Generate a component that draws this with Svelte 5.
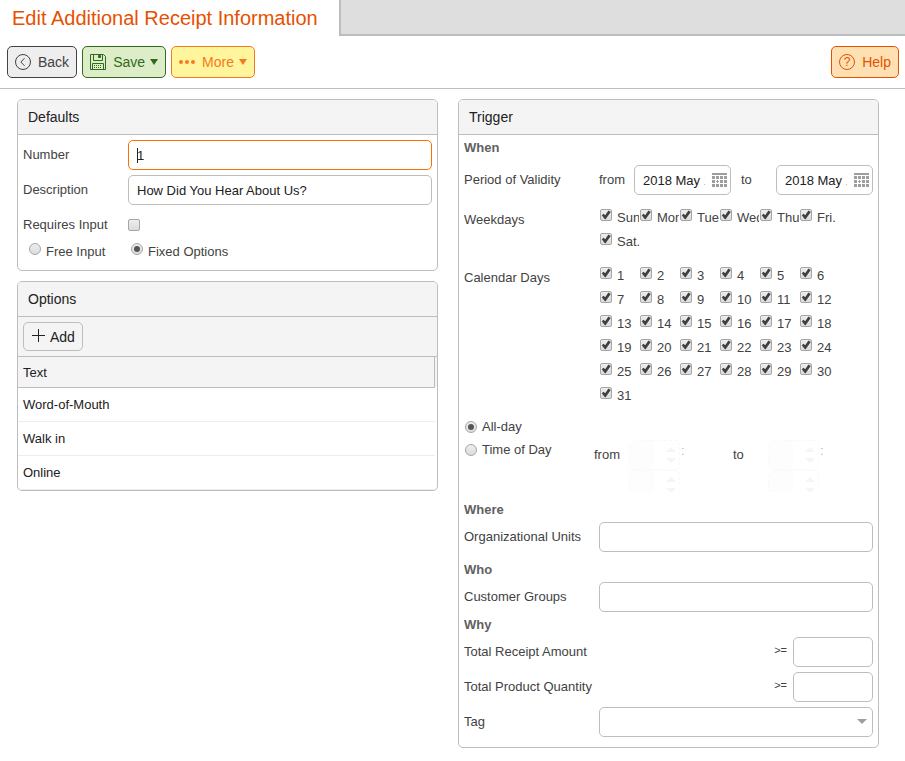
<script lang="ts">
	type Option = { id: number; text: string };

	let number = $state('1');
	let description = $state('How Did You Hear About Us?');
	let requiresInput = $state(false);
	let inputKind = $state('fixed');
	let timeKind = $state('all-day');
	let validFrom = $state('2018 May 1');
	let validTo = $state('2018 May 1');

	let options = $state<Option[]>([
		{ id: 1, text: 'Word-of-Mouth' },
		{ id: 2, text: 'Walk in' },
		{ id: 3, text: 'Online' }
	]);

	let weekdays = $state(
		['Sun.', 'Mon.', 'Tue.', 'Wed.', 'Thu.', 'Fri.', 'Sat.'].map((name) => ({ name, on: true }))
	);
	let days = $state(Array.from({ length: 31 }, (_, i) => ({ name: String(i + 1), on: true })));

	function addOption() {
		options.push({ id: options.length + 1, text: '' });
	}
</script>

{#snippet calendarIcon()}
	<svg width="15" height="14" viewBox="0 0 15 14" aria-hidden="true">
		<path d="M0 0h15v2H0z" />
		{#each [3, 7, 11] as y}
			{#each [0, 4, 8, 12] as x}
				{#if x === 4 && y === 7}
					<path d="M5 7h1v1h1v1H6v1H5V9H4V8h1z" />
				{:else}
					<rect {x} {y} width="3" height="3" />
				{/if}
			{/each}
		{/each}
	</svg>
{/snippet}

{#snippet dateField(id: string, value: string, label: string)}
	<div class="field date">
		<input {id} type="text" {value} aria-label={label} />
		<button type="button" aria-label="Open calendar">{@render calendarIcon()}</button>
	</div>
{/snippet}

{#snippet timeField(name: string)}
	<div class="time">
		<div class="spin">
			<input type="text" aria-label="{name} hour" disabled />
			<span class="arrows"></span>
		</div>
		<span class="colon">:</span>
		<div class="spin">
			<input type="text" aria-label="{name} minute" disabled />
			<span class="arrows"></span>
		</div>
	</div>
{/snippet}

<header class="tabs">
	<h1>Edit Additional Receipt Information</h1>
	<div class="rest"></div>
</header>

<nav class="toolbar">
	<button type="button" class="btn back">
		<svg width="16" height="16" viewBox="0 0 16 16" aria-hidden="true">
			<circle cx="8" cy="8" r="7.5" />
			<path d="M9.5 4.2 5.8 8l3.7 3.8" />
		</svg>
		<span>Back</span>
	</button>
	<button type="button" class="btn save">
		<svg width="16" height="16" viewBox="0 0 16 16" aria-hidden="true">
			<path d="M.5.5h13l2 2v13H.5zM3.5.5v6h9v-6M2.5 15.5v-6h11v6" />
			<path d="M4 11.5h8M4 13.5h8" stroke-dasharray="1 1" />
			<path class="solid" d="M8.5 1.5h2v2h-2z" />
		</svg>
		<span>Save</span>
		<i class="caret"></i>
	</button>
	<button type="button" class="btn more">
		<svg width="16" height="16" viewBox="0 0 16 16" aria-hidden="true">
			<circle class="dot" cx="2" cy="8" r="2" />
			<circle class="dot" cx="8" cy="8" r="2" />
			<circle class="dot" cx="14" cy="8" r="2" />
		</svg>
		<span>More</span>
		<i class="caret"></i>
	</button>
	<button type="button" class="btn help">
		<svg width="16" height="16" viewBox="0 0 16 16" aria-hidden="true">
			<circle cx="8" cy="8" r="7.5" />
			<text x="8" y="12" text-anchor="middle">?</text>
		</svg>
		<span>Help</span>
	</button>
</nav>

<main>
	<div class="column">
		<section class="panel">
			<h2>Defaults</h2>
			<div class="body">
				<div class="row">
					<label for="number">Number</label>
					<input id="number" class="field current" type="text" bind:value={number} />
				</div>
				<div class="row">
					<label for="description">Description</label>
					<input id="description" class="field" type="text" bind:value={description} />
				</div>
				<div class="row">
					<label for="requires">Requires Input</label>
					<input id="requires" type="checkbox" bind:checked={requiresInput} />
				</div>
				<div class="kinds">
					<label><input type="radio" name="kind" value="free" bind:group={inputKind} />Free Input</label>
					<label><input type="radio" name="kind" value="fixed" bind:group={inputKind} />Fixed Options</label>
				</div>
			</div>
		</section>

		<section class="panel">
			<h2>Options</h2>
			<div class="actions">
				<button type="button" class="add" onclick={addOption}>
					<svg width="14" height="14" viewBox="0 0 14 14" aria-hidden="true">
						<path d="M6.5 0v13M0 6.5h13" />
					</svg>
					<span>Add</span>
				</button>
			</div>
			<div class="table-wrap">
				<table>
					<thead>
						<tr><th>Text</th></tr>
					</thead>
					<tbody>
						{#each options as option (option.id)}
							<tr><td>{option.text}</td></tr>
						{/each}
					</tbody>
				</table>
			</div>
		</section>
	</div>

	<section class="panel">
		<h2>Trigger</h2>
		<div class="body trigger">
			<h3>When</h3>
			<div class="row spaced">
				<span class="name">Period of Validity</span>
				<div class="period">
					<label for="valid-from">from</label>
					{@render dateField('valid-from', validFrom, 'Valid from')}
					<label for="valid-to">to</label>
					{@render dateField('valid-to', validTo, 'Valid to')}
				</div>
			</div>
			<div class="row top spaced">
				<span>Weekdays</span>
				<div class="checks">
					{#each weekdays as day}
						<label><input type="checkbox" bind:checked={day.on} />{day.name}</label>
					{/each}
				</div>
			</div>
			<div class="row top spaced">
				<span>Calendar Days</span>
				<div class="checks">
					{#each days as day}
						<label><input type="checkbox" bind:checked={day.on} />{day.name}</label>
					{/each}
				</div>
			</div>
			<div class="hours">
				<label class="choice"><input type="radio" name="time" value="all-day" bind:group={timeKind} />All-day</label>
				<div class="range">
					<label class="choice"><input type="radio" name="time" value="range" bind:group={timeKind} />Time of Day</label>
					<span class="word">from</span>
					{@render timeField('From')}
					<span class="word">to</span>
					{@render timeField('To')}
				</div>
			</div>

			<h3 class="spaced">Where</h3>
			<div class="row">
				<label for="units">Organizational Units</label>
				<input id="units" class="field" type="text" />
			</div>

			<h3 class="spaced">Who</h3>
			<div class="row">
				<label for="groups">Customer Groups</label>
				<input id="groups" class="field" type="text" />
			</div>

			<h3>Why</h3>
			<div class="row">
				<label for="amount">Total Receipt Amount</label>
				<div class="limit">
					<span>&gt;=</span>
					<input id="amount" class="field" type="text" />
				</div>
			</div>
			<div class="row">
				<label for="quantity">Total Product Quantity</label>
				<div class="limit">
					<span>&gt;=</span>
					<input id="quantity" class="field" type="text" />
				</div>
			</div>
			<div class="row">
				<label for="tag">Tag</label>
				<div class="select">
					<select id="tag" class="field"><option value=""></option></select>
				</div>
			</div>
		</div>
	</section>
</main>

<style>
	:global(body) {
		background: #fff;
		color: #424242;
		font: 13px/15px 'Liberation Sans', Arial, sans-serif;
	}

	:global(#app) *,
	:global(#app) *::before {
		box-sizing: border-box;
	}

	h1,
	h2,
	h3 {
		margin: 0;
	}

	button,
	input,
	select {
		margin: 0;
		font: inherit;
	}

	svg {
		flex: none;
		fill: none;
		stroke: currentColor;
	}

	.solid {
		fill: currentColor;
	}

	.dot {
		fill: currentColor;
		stroke: none;
	}

	.tabs {
		display: flex;
		height: 36px;
	}

	h1 {
		padding: 0 21px 0 12px;
		color: #e65100;
		font-size: 20px;
		font-weight: 400;
		line-height: 36px;
		white-space: nowrap;
	}

	.rest {
		flex: 1;
		border: solid #bdbdbd;
		border-width: 0 0 2px 2px;
		background: #dedede;
	}

	.toolbar {
		display: flex;
		gap: 5px;
		padding: 10px 6px 10px 7px;
		border-bottom: 1px solid #bdbdbd;
	}

	.btn {
		display: flex;
		align-items: center;
		height: 32px;
		padding: 0 7px;
		border: 1px solid;
		border-radius: 5px;
		font-size: 14px;
		cursor: pointer;
	}

	.btn span {
		margin-left: 7px;
	}

	.back {
		background: #eee;
		color: #424242;
	}

	.save {
		background: #dcedc8;
		color: #33691e;
	}

	.more {
		background: #fff59d;
		color: #f57920;
	}

	.help {
		margin-left: auto;
		background: #ffe0b2;
		color: #e65100;
	}

	.help text {
		fill: currentColor;
		stroke: none;
		font-size: 12px;
	}

	.caret {
		width: 8px;
		height: 6px;
		margin-left: 5px;
		background: currentColor;
		clip-path: polygon(0 0, 100% 0, 50% 100%);
	}

	main {
		display: grid;
		grid-template-columns: 1fr 1fr;
		align-items: start;
		gap: 20px;
		padding: 10px 26px 13px 17px;
	}

	.column {
		display: grid;
		gap: 10px;
	}

	.panel {
		min-width: 0;
		border: 1px solid #bdbdbd;
		border-radius: 5px;
		overflow: hidden;
	}

	h2 {
		padding: 0 10px;
		border-bottom: 1px solid #bdbdbd;
		background: #f4f4f4;
		color: #212121;
		font-size: 14px;
		font-weight: 400;
		line-height: 34px;
	}

	h3 {
		color: #616161;
		font-size: 13px;
		line-height: 15px;
	}

	.body {
		display: flex;
		flex-direction: column;
		gap: 5px;
		padding: 5px;
	}

	.trigger {
		padding-bottom: 10px;
	}

	.row {
		display: grid;
		grid-template-columns: 105px 1fr;
		align-items: center;
		min-height: 30px;
	}

	.row > label,
	.name,
	.period label {
		align-self: start;
		padding-top: 1px;
		line-height: 28px;
	}

	.trigger .row {
		grid-template-columns: 135px 1fr;
	}

	.row.top {
		align-items: start;
	}

	.top > span {
		line-height: 30px;
	}

	.spaced {
		margin-top: 5px;
	}

	.field {
		width: 100%;
		min-width: 0;
		height: 30px;
		padding: 0 8px;
		border: 1px solid #bdbdbd;
		border-radius: 5px;
		outline: none;
		background: #fff;
		color: #212121;
	}

	.current {
		border-color: #ff6f00;
		background: linear-gradient(#212121, #212121) 8px 7px / 1px 15px no-repeat #fff;
	}

	input[type='checkbox'],
	input[type='radio'] {
		flex: none;
		appearance: none;
		width: 12px;
		height: 12px;
		border: 1px solid #a6a6a6;
		border-radius: 2px;
		background: linear-gradient(#ededed, #dcdcdc);
	}

	input[type='radio'] {
		border-radius: 50%;
	}

	input[type='checkbox']:checked::before {
		content: '';
		display: block;
		width: 10px;
		height: 10px;
		background: #404040;
		clip-path: polygon(8% 52%, 26% 38%, 42% 52%, 74% 6%, 98% 20%, 44% 94%, 34% 88%);
	}

	input[type='radio']:checked::before {
		content: '';
		display: block;
		width: 6px;
		height: 6px;
		margin: 2px;
		border-radius: 50%;
		background: #555;
	}

	.kinds {
		display: grid;
		grid-template-columns: 102px 1fr;
		min-height: 25px;
		margin-top: -5px;
		padding-left: 6px;
		line-height: 23px;
	}

	.kinds label {
		display: flex;
		gap: 5px;
	}

	.kinds input {
		margin-top: 3px;
	}

	.actions {
		padding: 5px;
		border-bottom: 1px solid #bdbdbd;
		background: #f4f4f4;
	}

	.add {
		display: flex;
		gap: 4px;
		height: 29px;
		padding: 0 7px 0 8px;
		border: 1px solid #bdbdbd;
		border-radius: 5px;
		background: #f4f4f4;
		color: #212121;
		font-size: 14px;
		line-height: 28px;
		cursor: pointer;
	}

	.add svg {
		margin-top: 6px;
	}

	.table-wrap {
		padding-right: 2px;
		background: linear-gradient(#f4f4f4, #f4f4f4) top / 100% 30px no-repeat;
	}

	table {
		width: 100%;
		border-collapse: separate;
		border-spacing: 0;
		color: #212121;
	}

	th {
		height: 31px;
		padding: 0 5px;
		border: solid #bdbdbd;
		border-width: 0 1px 1px 0;
		background: #f4f4f4;
		font-weight: 400;
		text-align: left;
	}

	td {
		height: 34px;
		padding: 0 5px;
		border-bottom: 1px solid #ededed;
	}

	.period {
		display: grid;
		grid-template-columns: 35px 1fr 45px 1fr;
		align-items: center;
	}

	.period label:nth-of-type(2) {
		padding-left: 10px;
	}

	.date {
		display: flex;
		padding: 0 0 0 8px;
	}

	.date input {
		flex: 1;
		min-width: 0;
		padding: 0;
		border: 0;
		outline: none;
		background: none;
		color: inherit;
	}

	.date button {
		flex: none;
		width: 25px;
		padding: 0 3px 0 7px;
		border: 0;
		background: none;
		color: #9e9e9e;
	}

	.date svg {
		display: block;
		fill: currentColor;
		stroke: none;
	}

	.checks {
		display: grid;
		grid-template-columns: repeat(6, 40px);
	}

	.checks label {
		display: flex;
		gap: 5px;
		height: 24px;
		padding-left: 1px;
		overflow: hidden;
		line-height: 26px;
	}

	.checks input {
		margin-top: 4px;
	}

	.hours {
		margin-top: 3px;
	}

	.choice {
		display: flex;
		align-items: center;
		gap: 5px;
		width: 130px;
		height: 23px;
		padding-left: 1px;
	}

	.range {
		display: flex;
		height: 54px;
	}

	.range .choice {
		flex: none;
	}

	.word {
		flex: none;
		width: 35px;
		line-height: 34px;
	}

	.time {
		display: flex;
		flex-wrap: wrap;
		align-content: flex-start;
		width: 104px;
		height: 54px;
		padding-top: 2px;
		overflow: hidden;
	}

	.spin {
		display: flex;
		align-items: center;
		width: 51px;
		height: 30px;
		border: 1px dashed #f8f8f8;
		border-radius: 5px;
	}

	.spin input {
		width: 36px;
		height: 28px;
		padding: 0;
		border: 0;
		background: linear-gradient(#fdfdfd, #fdfdfd) left / 24px 100% no-repeat;
	}

	.arrows {
		width: 10px;
		height: 16px;
		background: #f5f5f5;
		clip-path: polygon(0 31%, 50% 0, 100% 31%, 100% 69%, 50% 100%, 0 69%, 100% 69%, 100% 31%);
	}

	.colon {
		width: 50px;
		padding-left: 1px;
		color: #bdbdbd;
		line-height: 22px;
	}

	.limit {
		display: flex;
		justify-content: flex-end;
		gap: 6px;
	}

	.limit span {
		font-size: 11px;
		line-height: 26px;
	}

	.limit .field {
		width: 80px;
	}

	.select {
		position: relative;
	}

	.select::after {
		content: '';
		position: absolute;
		top: 12px;
		right: 6px;
		width: 10px;
		height: 5px;
		background: #9e9e9e;
		clip-path: polygon(0 0, 100% 0, 50% 100%);
		pointer-events: none;
	}

	select {
		display: block;
		appearance: none;
	}
</style>
